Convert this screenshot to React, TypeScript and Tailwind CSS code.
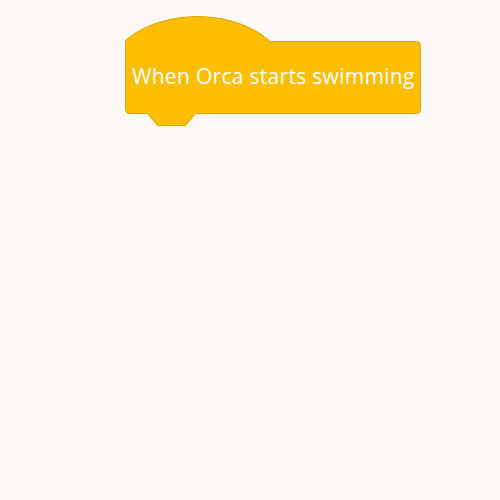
export default function App() {
  return (
    <div className="w-[500px] h-[500px] bg-[#fdf9f7] pt-[16px] pl-[125px]">
      <div className="relative flex flex-col w-[296px] h-[112px] pt-[25px]">
        <svg
          className="absolute inset-0"
          width="296"
          height="112"
          viewBox="-0.5 -0.5 296 112"
        >
          <path
            d="M0,24 C36,-7 106,-9 145,25 L291,25 A4,4 0 0 1 295,29 L295,93 A4,4 0 0 1 291,97 L70,97 L60,109 L32,109 L22,97 L4,97 A4,4 0 0 1 0,93 Z"
            fill="#ffbf00"
            stroke="#e0a60a"
            strokeWidth="1"
          />
        </svg>
        <div className="relative flex items-center h-[72px] pl-[7px]">
          <span
            className="text-white text-[21px] tracking-[0.3px] font-medium whitespace-nowrap"
            style={{ fontFamily: '"Open Sans", sans-serif' }}
          >
            When Orca starts swimming
          </span>
        </div>
      </div>
    </div>
  );
}
